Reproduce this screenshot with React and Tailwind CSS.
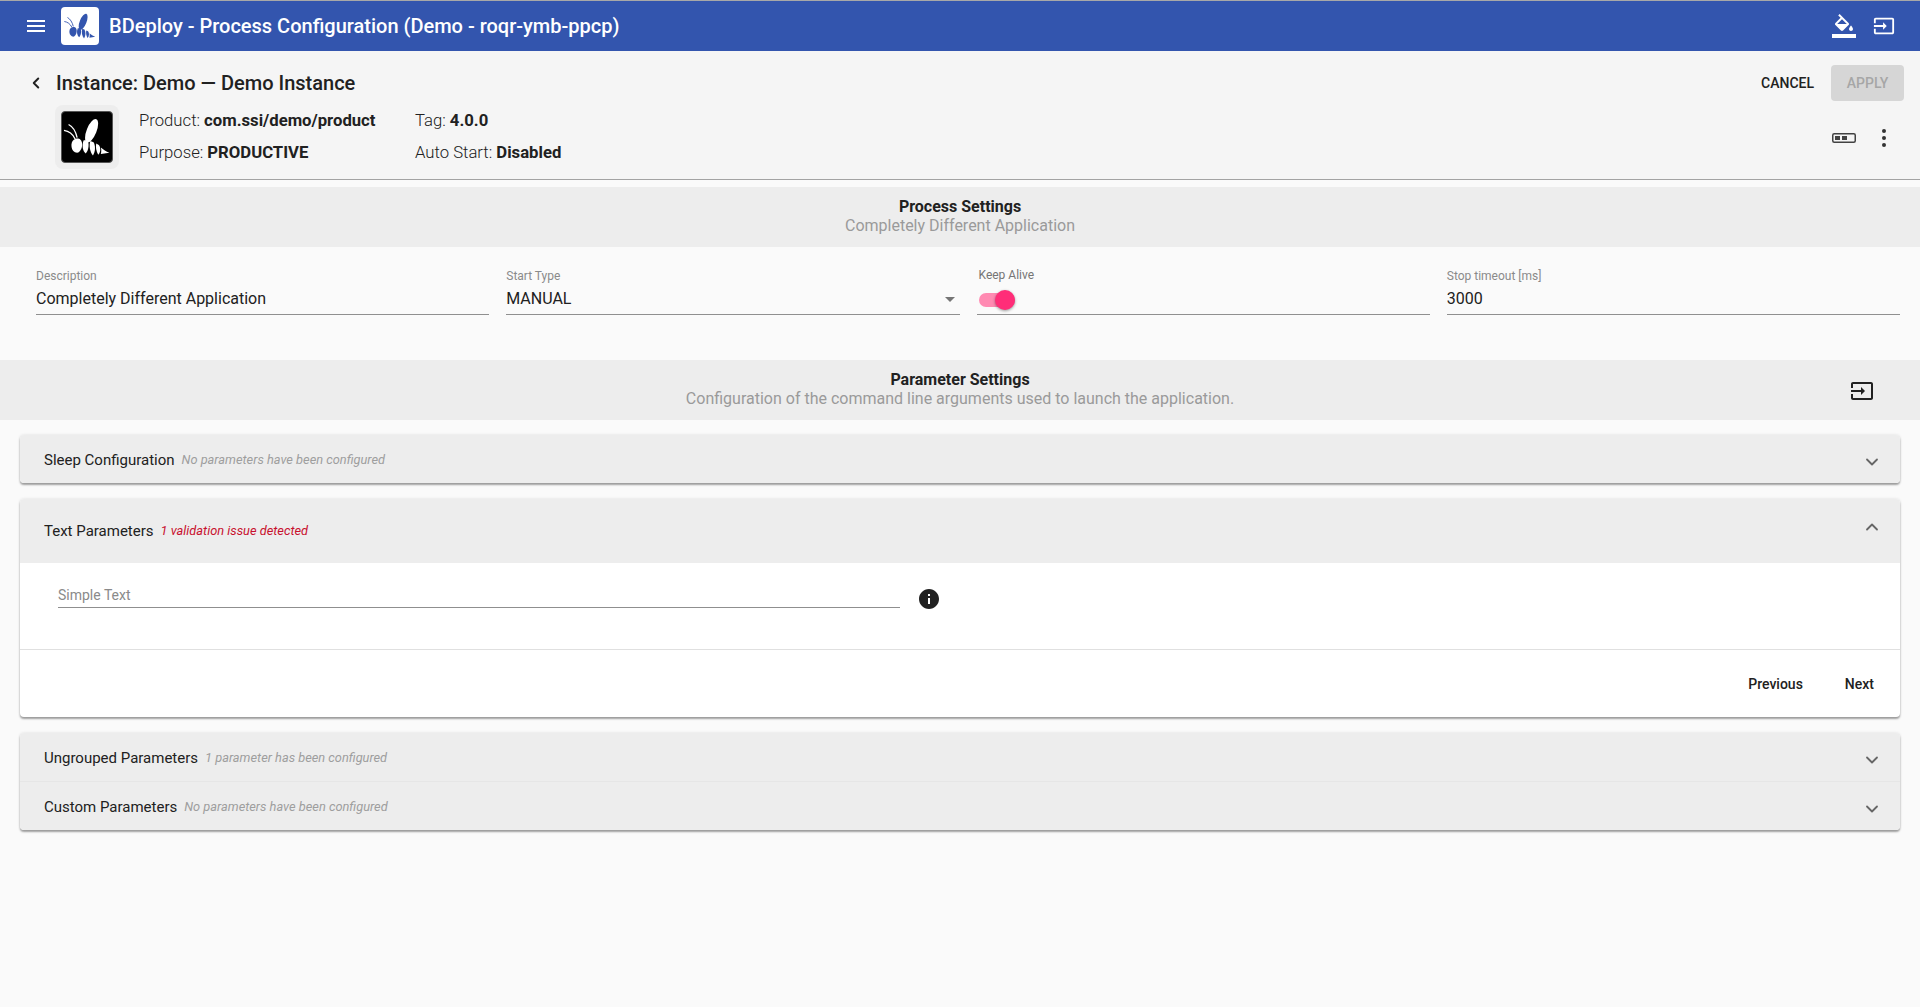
import React from "react";
import { ChevronDown, ChevronUp, ChevronLeft } from "lucide-react";

function Bee({ color }) {
  return (
    <svg viewBox="0 0 152 152" className="w-full h-full" fill={color}>
      <ellipse cx="90" cy="57" rx="15" ry="38" transform="rotate(22 90 57)" />
      <path d="M36 84C24 92 26 122 46 124C60 122 68 92 54 82C46 80 42 80 36 84Z" />
      <path d="M66 86C60 100 62 118 72 126C80 118 84 100 78 86Z" />
      <path d="M86 88C82 102 84 120 94 132C102 120 102 102 96 92Z" />
      <path d="M104 96C102 108 104 120 110 130C118 122 118 108 112 100Z" />
      <path d="M118 108C120 114 120 120 118 128L144 124C134 120 126 114 118 108Z" />
      <path d="M6 56C20 58 32 66 40 82" fill="none" stroke={color} strokeWidth="4" />
      <path d="M20 38C32 44 42 60 46 78" fill="none" stroke={color} strokeWidth="4" />
    </svg>
  );
}

function InputIcon({ className }) {
  return (
    <svg viewBox="0 0 24 24" fill="currentColor" className={className}>
      <path d="M21 3.01H3c-1.1 0-2 .9-2 2V9h2V4.99h18v14.03H3V15H1v4.01c0 1.1.9 1.98 2 1.98h18c1.1 0 2-.88 2-1.98v-14c0-1.11-.9-2-2-2zM11 16l4-4-4-4v3H1v2h10v3z" />
    </svg>
  );
}

function Field({ label, value, children }) {
  return (
    <div className="flex flex-col border-b border-[#8f8f8f] box-border h-[68px] pt-[22px]">
      <div className="text-xs leading-[14px] text-[#8a8a8a]">{label}</div>
      <div className="flex items-center justify-between text-base leading-5 text-[#212121] mt-[6px]">
        <span>{value}</span>
        {children}
      </div>
    </div>
  );
}

function SectionHead({ title, sub, children }) {
  return (
    <div className="relative h-[60px] bg-[#ededed] flex flex-col items-center pt-[10px]">
      <div className="text-base leading-5 font-bold text-[#212121]">{title}</div>
      <div className="-mt-px text-base leading-5 text-[#9a9a9a]">{sub}</div>
      {children}
    </div>
  );
}

function PanelHead({ title, note, open, noteColor = "text-[#9e9e9e]" }) {
  const Chevron = open ? ChevronUp : ChevronDown;
  return (
    <div className={`flex items-center pl-6 pr-[18px] bg-[#ededed] ${open ? "h-16" : "h-12 pt-[2px]"}`}>
      <span className="text-[15px] text-[#212121]">{title}</span>
      <span className={`ml-[7px] text-[12.8px] italic ${noteColor}`}>{note}</span>
      <Chevron className={`ml-auto w-5 h-5 text-[#666666] ${open ? "-mt-[8px]" : "mt-[3px]"}`} strokeWidth={2.2} />
    </div>
  );
}

export default function App() {
  return (
    <div className="min-h-[1007px] bg-[#fafafa] font-['Roboto',sans-serif] text-[#212121]">
      <header className="h-[51px] bg-[#3355ae] border-t border-[#a8a8a8] flex items-center text-white">
        <svg viewBox="0 0 24 24" fill="currentColor" className="ml-6 w-6 h-6">
          <path d="M3 18h18v-2H3v2zm0-5h18v-2H3v2zm0-7v2h18V6H3z" />
        </svg>
        <div className="ml-[13px] w-[38px] h-[38px] bg-white rounded-sm p-[2px]">
          <Bee color="#3355ae" />
        </div>
        <h1 className="ml-[10px] text-xl font-medium">BDeploy - Process Configuration (Demo - roqr-ymb-ppcp)</h1>
        <svg viewBox="0 0 24 24" fill="currentColor" className="ml-auto w-6 h-6">
          <path d="M16.56 8.94L7.62 0 6.21 1.41l2.38 2.38-5.15 5.15c-.59.59-.59 1.54 0 2.12l5.5 5.5c.29.29.68.44 1.06.44s.77-.15 1.06-.44l5.5-5.5c.59-.58.59-1.53 0-2.12zM5.21 10L10 5.21 14.79 10H5.21zM19 11.5s-2 2.17-2 3.5c0 1.1.9 2 2 2s2-.9 2-2c0-1.33-2-3.5-2-3.5z" />
          <path d="M0 20h24v4H0z" />
        </svg>
        <InputIcon className="ml-[17px] mr-[25px] w-[22px] h-[22px]" />
      </header>

      <section className="h-[129px] bg-[#f5f5f5] border-b border-[#a3a3a3] pl-[30px] pr-4 pt-[14px] box-border">
        <div className="flex items-center h-9">
          <ChevronLeft className="w-[18px] h-[18px] -ml-[3px]" strokeWidth={2.6} />
          <h2 className="ml-[11px] text-xl font-medium">Instance: Demo — Demo Instance</h2>
          <span className="ml-auto mr-[17px] text-sm font-medium">CANCEL</span>
          <button className="w-[73px] h-9 rounded bg-[#d6d6d6] text-sm font-medium text-[#a6a6a6]">APPLY</button>
        </div>
        <div className="flex items-center mt-1">
          <div className="ml-[25px] w-16 h-16 rounded-lg bg-[#ededed] p-[6px]">
            <div className="w-[52px] h-[52px] rounded-sm bg-black border border-[#555555]">
              <Bee color="#ffffff" />
            </div>
          </div>
          <div className="ml-5 grid grid-cols-[276px_auto] gap-y-3 text-[16.7px] leading-5 font-light">
            <div>Product: <b className="font-bold">com.ssi/demo/product</b></div>
            <div>Tag: <b className="font-bold">4.0.0</b></div>
            <div>Purpose: <b className="font-bold">PRODUCTIVE</b></div>
            <div>Auto Start: <b className="font-bold">Disabled</b></div>
          </div>
          <svg viewBox="0 0 24 10" className="ml-auto mt-[2px] w-6 h-[10px] text-[#424242]">
            <rect x="0.75" y="0.75" width="22.5" height="8.5" rx="1.5" fill="none" stroke="currentColor" strokeWidth="1.5" />
            <rect x="3" y="3" width="5" height="4" fill="currentColor" />
            <rect x="10" y="3" width="5" height="4" fill="currentColor" />
          </svg>
          <div className="ml-[26px] mr-[18px] mt-px flex flex-col gap-[3px]">
            <span className="w-1 h-1 rounded-full bg-[#333333]" />
            <span className="w-1 h-1 rounded-full bg-[#333333]" />
            <span className="w-1 h-1 rounded-full bg-[#333333]" />
          </div>
        </div>
      </section>

      <div className="mt-[7px]">
        <SectionHead title="Process Settings" sub="Completely Different Application" />
      </div>

      <div className="grid grid-cols-4 gap-x-[17px] pl-9 pr-5 h-[113px] items-start">
        <Field label="Description" value="Completely Different Application" />
        <Field label="Start Type" value="MANUAL">
          <span className="mr-[5px] w-0 h-0 border-x-[5px] border-x-transparent border-t-[5px] border-t-[#757575]" />
        </Field>
        <div className="h-[68px] border-b border-[#8f8f8f] box-border pt-[21px]">
          <div className="ml-[2px] text-xs leading-[14px] text-[#757575]">Keep Alive</div>
          <div className="relative ml-[2px] mt-[11px] w-9 h-[14px] rounded-full bg-[#ff8ab2]">
            <span className="absolute -top-[3px] right-0 w-5 h-5 rounded-full bg-[#ff2d78] shadow-[0_1px_3px_rgba(0,0,0,0.4)]" />
          </div>
        </div>
        <Field label="Stop timeout [ms]" value="3000" />
      </div>

      <SectionHead title="Parameter Settings" sub="Configuration of the command line arguments used to launch the application.">
        <InputIcon className="absolute right-[46px] top-[19px] w-6 h-6 text-[#212121]" />
      </SectionHead>

      <div className="px-5 pt-[15px] flex flex-col gap-4">
        <div className="rounded shadow-[0_2px_2px_rgba(0,0,0,0.35),0_0_3px_rgba(0,0,0,0.12)] overflow-hidden">
          <PanelHead title="Sleep Configuration" note="No parameters have been configured" />
        </div>

        <div className="rounded bg-white shadow-[0_2px_2px_rgba(0,0,0,0.35),0_0_3px_rgba(0,0,0,0.12)] overflow-hidden">
          <PanelHead title="Text Parameters" note="1 validation issue detected" open noteColor="text-[#c8102e]" />
          <div className="h-[87px] border-b border-[#e0e0e0] pl-[38px] flex items-start">
            <div className="w-[842px] h-[45px] border-b border-[#8f8f8f] box-border pt-6 text-sm leading-4 text-[#8a8a8a]">Simple Text</div>
            <svg viewBox="0 0 24 24" fill="#212121" className="ml-[17px] mt-6 w-6 h-6">
              <path d="M12 2C6.48 2 2 6.48 2 12s4.48 10 10 10 10-4.48 10-10S17.52 2 12 2zm1 15h-2v-6h2v6zm0-8h-2V7h2v2z" />
            </svg>
          </div>
          <div className="h-[67px] flex items-center justify-end pr-[26px] gap-[42px] text-sm font-medium">
            <span>Previous</span>
            <span>Next</span>
          </div>
        </div>

        <div className="rounded shadow-[0_2px_2px_rgba(0,0,0,0.35),0_0_3px_rgba(0,0,0,0.12)] overflow-hidden">
          <div className="border-b border-[#e6e6e6]">
            <PanelHead title="Ungrouped Parameters" note="1 parameter has been configured" />
          </div>
          <PanelHead title="Custom Parameters" note="No parameters have been configured" />
        </div>
      </div>
    </div>
  );
}
